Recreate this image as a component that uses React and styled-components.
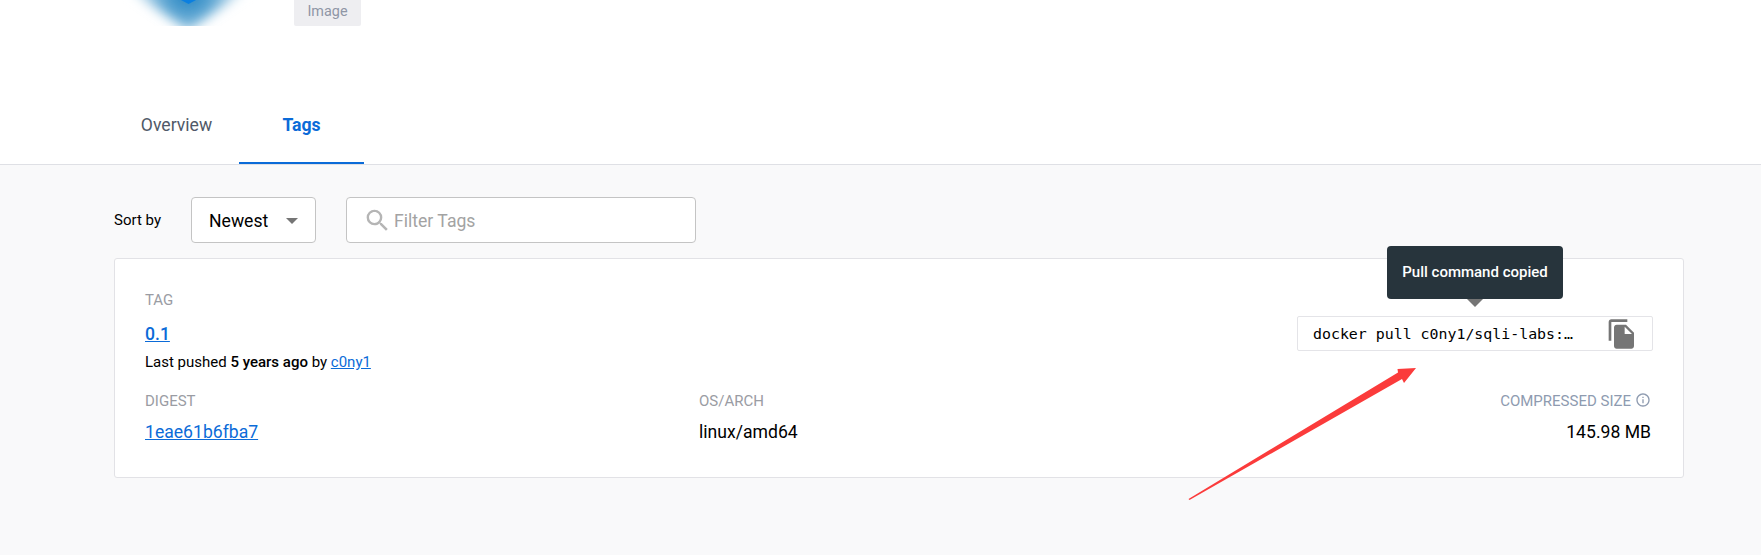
import React from "react";
import styled, { createGlobalStyle } from "styled-components";
import { MdFileCopy, MdInfoOutline, MdSearch } from "react-icons/md";

const GlobalStyle = createGlobalStyle`
  html, body {
    margin: 0;
    padding: 0;
    background: #f9f9fa;
    font-family: Roboto, "Liberation Sans", sans-serif;
    color: #000;
  }
`;

const Page = styled.div`
  position: relative;
  width: 1761px;
  height: 555px;
  overflow: hidden;
`;

const Header = styled.header`
  background: #fff;
  border-bottom: 1px solid #dfe0e5;
  height: 164px;
  display: flex;
  flex-direction: column;
  justify-content: space-between;
`;

const TitleRow = styled.div`
  height: 26px;
  display: flex;
  align-items: flex-end;
  padding-left: 120px;
`;

const Logo = styled.svg`
  width: 142px;
  height: 26px;
  flex: none;
`;

const Badge = styled.span`
  margin-left: 32px;
  width: 67px;
  height: 26px;
  background: #eeeef1;
  border-radius: 0 0 2px 2px;
  color: #8f96a6;
  font-size: 14.4px;
  line-height: 24px;
  text-align: center;
`;

const Tabs = styled.nav`
  display: flex;
  padding-left: 114px;
`;

const Tab = styled.a`
  width: 125px;
  height: 64px;
  box-sizing: border-box;
  display: flex;
  align-items: center;
  justify-content: center;
  padding-bottom: 13px;
  font-size: 17.6px;
  font-weight: ${(p) => (p.$active ? 700 : 400)};
  color: ${(p) => (p.$active ? "#0b6bd8" : "#505968")};
  border-bottom: 2px solid ${(p) => (p.$active ? "#0b6bd8" : "transparent")};
`;

const Content = styled.main`
  padding: 32px 77px 0 114px;
`;

const Filters = styled.div`
  display: flex;
  align-items: center;
  height: 46px;
`;

const SortLabel = styled.span`
  width: 77px;
  font-size: 15px;
`;

const Select = styled.div`
  width: 125px;
  height: 46px;
  box-sizing: border-box;
  border: 1px solid #c4c4c4;
  border-radius: 4px;
  background: #fff;
  display: flex;
  align-items: center;
  padding: 1px 0 0 17px;
  font-size: 17.6px;
`;

const Caret = styled.span`
  margin-left: 18px;
  border-left: 6px solid transparent;
  border-right: 6px solid transparent;
  border-top: 6px solid #757575;
`;

const FilterBox = styled.div`
  margin-left: 30px;
  width: 350px;
  height: 46px;
  box-sizing: border-box;
  border: 1px solid #c4c4c4;
  border-radius: 4px;
  background: #fff;
  display: flex;
  align-items: center;
  padding: 1px 0 0 16px;
  font-size: 17.6px;
  color: #a3a3a3;
  svg {
    margin-right: 2px;
    color: #b5b5b5;
    flex: none;
  }
`;

const Card = styled.section`
  margin-top: 15px;
  height: 220px;
  box-sizing: border-box;
  background: #fff;
  border: 1px solid #e2e2e6;
  border-radius: 3px;
  padding: 32px 30px 0 30px;
`;

const TopRow = styled.div`
  display: flex;
  justify-content: space-between;
  height: 101px;
`;

const Label = styled.div`
  font-size: 15px;
  line-height: 18px;
  color: ${(p) => (p.$blue ? "#8e9bb0" : "#9a9ca3")};
  display: flex;
  align-items: center;
  gap: 4px;
  justify-content: ${(p) => (p.$right ? "flex-end" : "flex-start")};
  svg {
    color: #8e9bb0;
    margin-top: -3px;
  }
`;

const TagLink = styled.a`
  display: inline-block;
  margin-top: 14px;
  font-size: 17.6px;
  font-weight: 500;
  line-height: 22px;
  color: #0b6bd8;
  text-decoration: underline;
`;

const Pushed = styled.div`
  margin-top: 8px;
  font-size: 15px;
  line-height: 18px;
  b {
    font-weight: 500;
  }
  a {
    color: #0b6bd8;
    text-decoration: underline;
  }
`;

const CommandWrap = styled.div`
  position: relative;
  margin-top: 25px;
`;

const Command = styled.div`
  width: 356px;
  height: 35px;
  box-sizing: border-box;
  border: 1px solid #e4e4e8;
  border-radius: 2px;
  display: flex;
  align-items: center;
  padding: 0 14px 0 15px;
  font-family: "DejaVu Sans Mono", "Liberation Mono", monospace;
  font-size: 14.9px;
  white-space: pre;
  svg {
    margin-left: auto;
    color: #757575;
    flex: none;
  }
`;

const Tooltip = styled.div`
  position: absolute;
  left: 90px;
  top: -70px;
  width: 176px;
  height: 53px;
  background: #27343c;
  border-radius: 4px;
  color: #fff;
  font-size: 15px;
  font-weight: 500;
  display: flex;
  align-items: center;
  justify-content: center;
  padding-bottom: 1px;
  box-sizing: border-box;
  &::after {
    content: "";
    position: absolute;
    left: 80px;
    top: 53px;
    border-left: 8px solid transparent;
    border-right: 8px solid transparent;
    border-top: 8px solid #757575;
  }
`;

const BottomRow = styled.div`
  display: grid;
  grid-template-columns: 554px 1fr auto;
  padding-right: 2px;
`;

const Value = styled.div`
  margin-top: 11px;
  font-size: 17.6px;
  line-height: 22px;
  text-align: ${(p) => (p.$right ? "right" : "left")};
`;

const HashLink = styled.a`
  color: #0b6bd8;
  text-decoration: underline;
`;

const Annotation = styled.svg`
  position: absolute;
  left: 0;
  top: 0;
  pointer-events: none;
`;

export default function App() {
  return (
    <Page>
      <GlobalStyle />
      <Header>
        <TitleRow>
          <Logo viewBox="0 0 142 26">
            <defs>
              <radialGradient id="glow" cx="68" cy="-8" r="62" gradientUnits="userSpaceOnUse">
                <stop offset="0" stopColor="#1b7fc0" />
                <stop offset="0.4" stopColor="#5ba5d2" />
                <stop offset="0.75" stopColor="#bcdaec" />
                <stop offset="1" stopColor="#ffffff" />
              </radialGradient>
              <filter id="soft" x="-20%" y="-20%" width="140%" height="140%">
                <feGaussianBlur stdDeviation="6" />
              </filter>
            </defs>
            <path d="M68 31L-18 -30H154Z" fill="url(#glow)" filter="url(#soft)" />
            <path d="M61 0H76L68.5 4Z" fill="#0b7fe0" />
          </Logo>
          <Badge>Image</Badge>
        </TitleRow>
        <Tabs>
          <Tab>Overview</Tab>
          <Tab $active>Tags</Tab>
        </Tabs>
      </Header>
      <Content>
        <Filters>
          <SortLabel>Sort by</SortLabel>
          <Select>
            Newest
            <Caret />
          </Select>
          <FilterBox>
            <MdSearch size={29} />
            Filter Tags
          </FilterBox>
        </Filters>
        <Card>
          <TopRow>
            <div>
              <Label>TAG</Label>
              <TagLink>0.1</TagLink>
              <Pushed>
                Last pushed <b>5 years ago</b> by <a>c0ny1</a>
              </Pushed>
            </div>
            <CommandWrap>
              <Tooltip>Pull command copied</Tooltip>
              <Command>
                docker pull c0ny1/sqli-labs:…
                <MdFileCopy size={32} />
              </Command>
            </CommandWrap>
          </TopRow>
          <BottomRow>
            <div>
              <Label>DIGEST</Label>
              <Value>
                <HashLink>1eae61b6fba7</HashLink>
              </Value>
            </div>
            <div>
              <Label>OS/ARCH</Label>
              <Value>linux/amd64</Value>
            </div>
            <div>
              <Label $blue $right>
                COMPRESSED SIZE
                <MdInfoOutline size={16} />
              </Label>
              <Value $right>145.98 MB</Value>
            </div>
          </BottomRow>
        </Card>
      </Content>
      <Annotation width="1761" height="555" viewBox="0 0 1761 555">
        <path d="M1188.5 499L1398 372.5L1397.5 369L1416 368L1404 383L1402 379L1189.5 500Z" fill="#fb3b3b" />
      </Annotation>
    </Page>
  );
}
